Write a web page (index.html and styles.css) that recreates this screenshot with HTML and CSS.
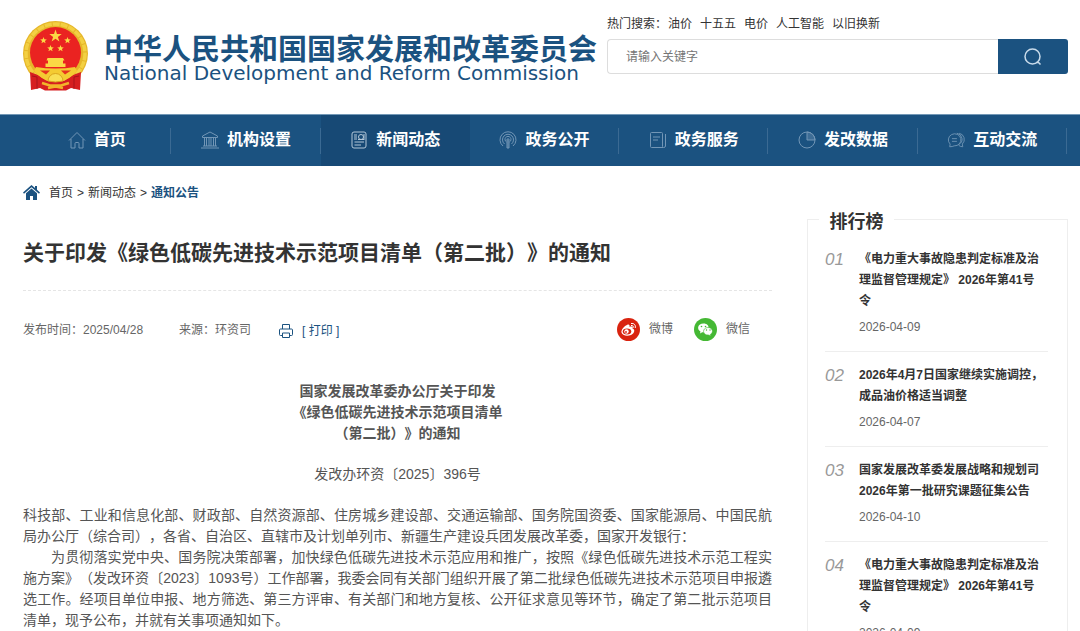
FILE: index.html
```html
<!DOCTYPE html>
<html lang="zh-CN">
<head>
<meta charset="utf-8">
<meta name="viewport" content="width=device-width, initial-scale=1">
<title>关于印发《绿色低碳先进技术示范项目清单（第二批）》的通知</title>
<link rel="stylesheet" href="styles.css">
</head>
<body>
<header class="header">
  <a class="brand" href="#">
    <svg class="emblem" viewBox="0 0 65 70" aria-hidden="true">
      <circle cx="32.500" cy="32.500" r="32.500" fill="#e6b62a"/>
      <circle cx="32.500" cy="32.500" r="29.500" fill="none" stroke="#f3d043" stroke-width="3.500" stroke-dasharray="7 1"/>
      <circle cx="32.500" cy="31.500" r="25.500" fill="#ea2321"/>
      <g fill="#fbd945">
        <path d="M32.500 8.500l1.500 4.600h4.700l-3.800 2.800 1.500 4.600-3.900-2.800-3.900 2.800 1.500-4.600-3.800-2.800h4.700z"/>
        <path d="M20.500 16l.9 2.300 2.400.1-1.900 1.500.7 2.400-2.100-1.400-2.100 1.400.7-2.400-1.900-1.500 2.400-.1z"/>
        <path d="M44.500 16l.9 2.300 2.400.1-1.900 1.500.7 2.400-2.100-1.400-2.100 1.400.7-2.400-1.900-1.500 2.400-.1z"/>
        <path d="M27.500 24l.9 2.300 2.400.1-1.900 1.500.7 2.400-2.100-1.400-2.100 1.400.7-2.400-1.900-1.500 2.400-.1z"/>
        <path d="M37.500 24l.9 2.300 2.400.1-1.900 1.500.7 2.400-2.100-1.400-2.100 1.400.7-2.400-1.900-1.500 2.400-.1z"/>
        <path d="M24.500 37h15.500l1.500 2.500h-1.500v3h2.500v3.500h-20v-3.500h2.500v-3h-1.500z"/>
      </g>
      <path d="M7 51l8 3 9 6h17l9-6 8-3-1 18-9-2-5 2.500h-21l-5-2.500-9 2z" fill="#d61f20"/>
      <path d="M13 46q9 1.500 19.500 1.500t19.500-1.500l2 4q-8 9-15 9.500h-13q-7-.5-15-9.500z" fill="#f4cb32"/>
      <path d="M17 49.500h10l-4 4zM48 49.500h-10l4 4z" fill="#e5331f"/>
      <path d="M9 55l5 1v12M56 55l-5 1v12" fill="none" stroke="#a8151a"/>
      <path d="M25 60a7.500 7.500 0 0 1 15 0l-7.500 1z" fill="#f9df55" stroke="#dba51e"/>
      <path d="M19 62l8 2.500h11l8-2.500M25 67l7.500-1.500 7.500 1.500" fill="none" stroke="#f2b52a" stroke-width="2.500"/>
    </svg>
    <span class="brand-text">
      <span class="brand-cn">中华人民共和国国家发展和改革委员会</span>
      <span class="brand-en">National Development and Reform Commission</span>
    </span>
  </a>
  <div class="search">
    <div class="hot"><span>热门搜索：</span><a href="#">油价</a><a href="#">十五五</a><a href="#">电价</a><a href="#">人工智能</a><a href="#">以旧换新</a></div>
    <form class="search-form">
      <input class="search-input" type="text" aria-label="搜索关键字" placeholder="请输入关键字">
      <button class="search-button" type="button" aria-label="搜索">
        <svg width="18" height="18" viewBox="0 0 18 18" fill="none" stroke="#c9dbea" stroke-width="1.500"><circle cx="8.500" cy="8.500" r="7.500"/><path d="M12.500 14.500h2l2 2"/></svg>
      </button>
    </form>
  </div>
</header>

<nav class="nav" aria-label="主导航">
  <a class="nav-item" href="#"><svg class="nav-icon" viewBox="0 0 18 18"><path d="M1 9.500L9 1.500l8 8M3 8v9h4v-4.500q0-1 1-1h2q1 0 1 1V17h4V8"/></svg>首页</a>
  <a class="nav-item" href="#"><svg class="nav-icon" viewBox="0 0 18 18"><path d="M9 1L1.500 5v1.500h15V5zM3.500 7v8M5.500 7v8M8 7v8M10 7v8M12.500 7v8M14.500 7v8M2 15h14M0 17h18"/></svg>机构设置</a>
  <a class="nav-item active" href="#"><svg class="nav-icon" viewBox="0 0 18 18"><rect x="2" y="1" width="14" height="16" rx="2"/><circle cx="11" cy="6" r="2.500"/><path d="M4 4h3M4 6h3M4 8h3M4.500 11H14M4.500 14H11M8 8.500h6M14 3v6"/></svg>新闻动态</a>
  <a class="nav-item" href="#"><svg class="nav-icon" viewBox="0 0 18 18"><path d="M4 15A8 8 0 1 1 14 15M5.500 13A5.500 5.500 0 1 1 12.500 13M7.500 11A3 3 0 1 1 10.500 11M9 9v8M8 8h2v9H8z"/></svg>政务公开</a>
  <a class="nav-item" href="#"><svg class="nav-icon" viewBox="0 0 18 18"><rect x="1.500" y="1.500" width="12" height="15" rx="1"/><path d="M16.500 3v12q0 1.500-2 1.500H5M4 6h7M4 9h5"/></svg>政务服务</a>
  <a class="nav-item" href="#"><svg class="nav-icon" viewBox="0 0 18 18"><circle cx="9" cy="9" r="8"/><path d="M9 1v8h8A8 8 0 0 0 9 1z" fill="currentColor" fill-opacity=".4"/></svg>发改数据</a>
  <a class="nav-item" href="#"><svg class="nav-icon" viewBox="0 0 20 18"><path d="M3 16.500l.5-3A7 6.700 0 1 1 8 15.500q-2 1-5 1zM11 1.500a7 6.700 0 0 1 2 12.500M13.500 1.500a7 7 0 0 1 3.500 12l.5 3q-2.500 0-4.500-1.500M5.500 7.500h5.500M5.500 10.500h5.500"/></svg>互动交流</a>
</nav>

<nav class="crumbs" aria-label="当前位置">
  <svg class="crumb-home" viewBox="0 0 17 15" aria-hidden="true"><path d="M8.500 0L0 7.500l1 1.200L8.500 2.300 16 8.700l1-1.200-3-2.700V1h-2v2.100zM8.500 3.500L3 8.300V15h4v-4h3v4h4V8.300z" fill="#1b5280"/></svg>
  <a href="#">首页</a><span class="gt">&gt;</span><a href="#">新闻动态</a><span class="gt">&gt;</span><a class="current" href="#">通知公告</a>
</nav>

<div class="layout">
  <main class="article">
    <h1 class="title">关于印发《绿色低碳先进技术示范项目清单（第二批）》的通知</h1>
    <div class="meta">
      <span class="published">发布时间：2025/04/28</span>
      <span class="source">来源：环资司</span>
      <button class="print" type="button">
        <svg width="14" height="14" viewBox="0 0 14 14" fill="none" stroke="currentColor"><path d="M3.500 5V.5h7V5M3 11.500H1.500q-1 0-1-1V6q0-1 1-1h11q1 0 1 1v4.500q0 1-1 1H11M3.500 9h7v4.500h-7z"/></svg>
        [ 打印 ]
      </button>
      <div class="share">
        <a href="#"><svg width="23" height="23" viewBox="0 0 23 23" aria-hidden="true"><circle cx="11.500" cy="11.500" r="11.500" fill="#d9230f"/><path d="M10 7c2-1 3 0 2.500 2 2-1 4-.5 3 1.500 3 1 2 5-1.500 6.500-4 1.500-9 .5-9.500-2.500C4 12 7 8 10 7z" fill="#fff"/><ellipse cx="10" cy="13.500" rx="4.300" ry="3" fill="#d9230f"/><circle cx="9.500" cy="13.500" r="2.200" fill="#fff"/><circle cx="9" cy="14" r=".9" fill="#d9230f"/><path d="M14 5.500c3-.5 5 1.500 4.200 4.500M14 7.500c1.500-.3 2.700.6 2.300 2.200" fill="none" stroke="#fff"/></svg>微博</a>
        <a href="#"><svg width="23" height="23" viewBox="0 0 23 23" aria-hidden="true"><circle cx="11.500" cy="11.500" r="11.500" fill="#45b834"/><path d="M9.500 5.500c-6 0-7 6-3 8l-.5 2 2.200-1.200c7 1 9.300-8.800 1.300-8.800z" fill="#fff"/><path d="M14 9.500c-6 0-6 8 .5 7.500l2.300 1-.5-1.600c4.200-2.400 1.700-6.900-2.300-6.900z" fill="#fff" stroke="#45b834" stroke-width=".6"/><g fill="#45b834"><circle cx="7.500" cy="8.500" r=".8"/><circle cx="11.500" cy="8.500" r=".8"/><circle cx="12.500" cy="12" r=".7"/><circle cx="16" cy="12" r=".7"/></g></svg>微信</a>
      </div>
    </div>
    <div class="content">
      <p class="doc-title">国家发展改革委办公厅关于印发<br>《绿色低碳先进技术示范项目清单<br>（第二批）》的通知</p>
      <p class="doc-number">发改办环资〔2025〕396号</p>
      <div class="doc-body">
        <p>科技部、工业和信息化部、财政部、自然资源部、住房城乡建设部、交通运输部、国务院国资委、国家能源局、中国民航局办公厅（综合司），各省、自治区、直辖市及计划单列市、新疆生产建设兵团发展改革委，国家开发银行：</p>
        <p class="indent">为贯彻落实党中央、国务院决策部署，加快绿色低碳先进技术示范应用和推广，按照《绿色低碳先进技术示范工程实施方案》（发改环资〔2023〕1093号）工作部署，我委会同有关部门组织开展了第二批绿色低碳先进技术示范项目申报遴选工作。经项目单位申报、地方筛选、第三方评审、有关部门和地方复核、公开征求意见等环节，确定了第二批示范项目清单，现予公布，并就有关事项通知如下。</p>
      </div>
    </div>
  </main>

  <aside class="ranking">
    <h2 class="ranking-title">排行榜</h2>
    <ol class="ranking-list">
      <li class="rank"><span class="rank-no">01</span><div><a class="rank-link" href="#">《电力重大事故隐患判定标准及治理监督管理规定》 2026年第41号令</a><time class="rank-date">2026-04-09</time></div></li>
      <li class="rank"><span class="rank-no">02</span><div><a class="rank-link" href="#">2026年4月7日国家继续实施调控，成品油价格适当调整</a><time class="rank-date">2026-04-07</time></div></li>
      <li class="rank"><span class="rank-no">03</span><div><a class="rank-link" href="#">国家发展改革委发展战略和规划司2026年第一批研究课题征集公告</a><time class="rank-date">2026-04-10</time></div></li>
      <li class="rank"><span class="rank-no">04</span><div><a class="rank-link" href="#">《电力重大事故隐患判定标准及治理监督管理规定》 2026年第41号令</a><time class="rank-date">2026-04-09</time></div></li>
    </ol>
  </aside>
</div>
</body>
</html>
```
FILE: styles.css
```css
* {
  box-sizing: border-box;
}

body {
  margin: 0;
  background: #fff;
  color: #333;
  font: 12px/20px "Liberation Sans", "Noto Sans CJK SC", sans-serif;
  text-spacing-trim: space-all;
}

a {
  color: inherit;
  text-decoration: none;
}

p, h1, h2, ol {
  margin: 0;
  padding: 0;
}

.header {
  display: flex;
  justify-content: space-between;
  align-items: flex-start;
  height: 114px;
  padding: 0 12px 0 23px;
}

.brand {
  display: flex;
  gap: 16px;
  padding-top: 21px;
  color: #1b5280;
  white-space: nowrap;
}

.emblem {
  width: 65px;
  height: 70px;
}

.brand-text {
  display: flex;
  flex-direction: column;
  padding-top: 9px;
}

.brand-cn {
  font: bold 29px/34px "Noto Sans CJK SC", sans-serif;
}

.brand-en {
  font: 20px/18px "DejaVu Sans", sans-serif;
}

.search {
  flex: 0 0 461px;
  padding-top: 14px;
}

.hot {
  display: flex;
  gap: 8px;
  margin-bottom: 5px;
}

.hot span {
  margin-right: -7px;
}

.search-form {
  display: flex;
  height: 35px;
}

.search-input {
  flex: 1;
  min-width: 0;
  padding: 0 18px;
  border: 1px solid #ddd;
  border-right: 0;
  border-radius: 4px 0 0 4px;
  font: inherit;
}

.search-input::placeholder {
  color: #757575;
}

.search-button {
  display: flex;
  align-items: center;
  justify-content: center;
  width: 70px;
  padding: 0;
  border: 0;
  border-radius: 0 3px 3px 0;
  background: #1b5280;
}

.nav {
  display: flex;
  height: 52px;
  padding: 0 13px 0 22px;
  border-top: 1px solid #7398b6;
  background: #1b5280;
}

.nav-item {
  display: flex;
  flex: 1;
  align-items: center;
  justify-content: center;
  gap: 8px;
  padding-bottom: 1px;
  background: linear-gradient(#3b6a93, #3b6a93) right center / 1px 26px no-repeat;
  color: #fff;
  font-size: 16px;
  font-weight: bold;
}

.nav-item.active {
  background: #174975;
}

.nav-icon {
  width: 18px;
  height: 18px;
  fill: none;
  stroke: currentColor;
  color: #7296b6;
}

.active .nav-icon {
  color: #b4c8d9;
}

.crumbs {
  display: flex;
  align-items: center;
  height: 52px;
  padding: 1px 23px 0;
}

.crumb-home {
  width: 17px;
  height: 15px;
  margin-right: 9px;
}

.gt {
  margin: 0 4px;
}

.current {
  color: #1b5280;
  font-weight: bold;
}

.layout {
  display: grid;
  grid-template-columns: minmax(0, 1fr) 261px;
  align-items: start;
  gap: 35px;
  padding: 0 12px 0 23px;
}

.title {
  padding: 19px 0 21px;
  border-bottom: 1px dashed #e5e5e5;
  font-size: 21px;
  line-height: 32px;
}

.meta {
  display: flex;
  align-items: center;
  height: 78px;
  color: #666;
}

.source {
  margin: 0 28px 0 36px;
}

.print {
  display: flex;
  align-items: center;
  gap: 9px;
  padding: 2px 0 0;
  border: 0;
  background: none;
  color: #1b5280;
  font: inherit;
}

.share {
  display: flex;
  gap: 21px;
  margin-left: auto;
  padding: 0 22px 2px 0;
}

.share a {
  display: flex;
  align-items: center;
  gap: 9px;
}

.content {
  display: flex;
  flex-direction: column;
  gap: 20px;
  padding-top: 12px;
  color: #555;
  font-size: 14px;
  line-height: 21px;
}

.doc-title {
  font-weight: bold;
  text-align: center;
}

.doc-number {
  text-align: center;
}

.doc-body {
  text-align: justify;
}

.indent {
  text-indent: 2em;
}

.ranking {
  margin-top: 1px;
  padding: 0 19px 0 17px;
  border: 1px solid #eee;
}

.ranking-title {
  width: 75px;
  margin: -12px 0 0 -6px;
  background: #fff;
  font-size: 18px;
  line-height: 28px;
  text-align: center;
}

.ranking-list {
  list-style: none;
}

.rank {
  display: grid;
  grid-template-columns: 34px minmax(0, 1fr);
  padding: 13px 0;
  border-bottom: 1px solid #eee;
}

.rank-no {
  color: #999;
  font-size: 17px;
  font-style: italic;
  line-height: 21px;
}

.rank-link {
  display: block;
  padding-right: 3px;
  font-weight: bold;
  line-height: 21px;
}

.rank-date {
  display: block;
  margin-top: 5px;
  color: #666;
  line-height: 21px;
}
```
